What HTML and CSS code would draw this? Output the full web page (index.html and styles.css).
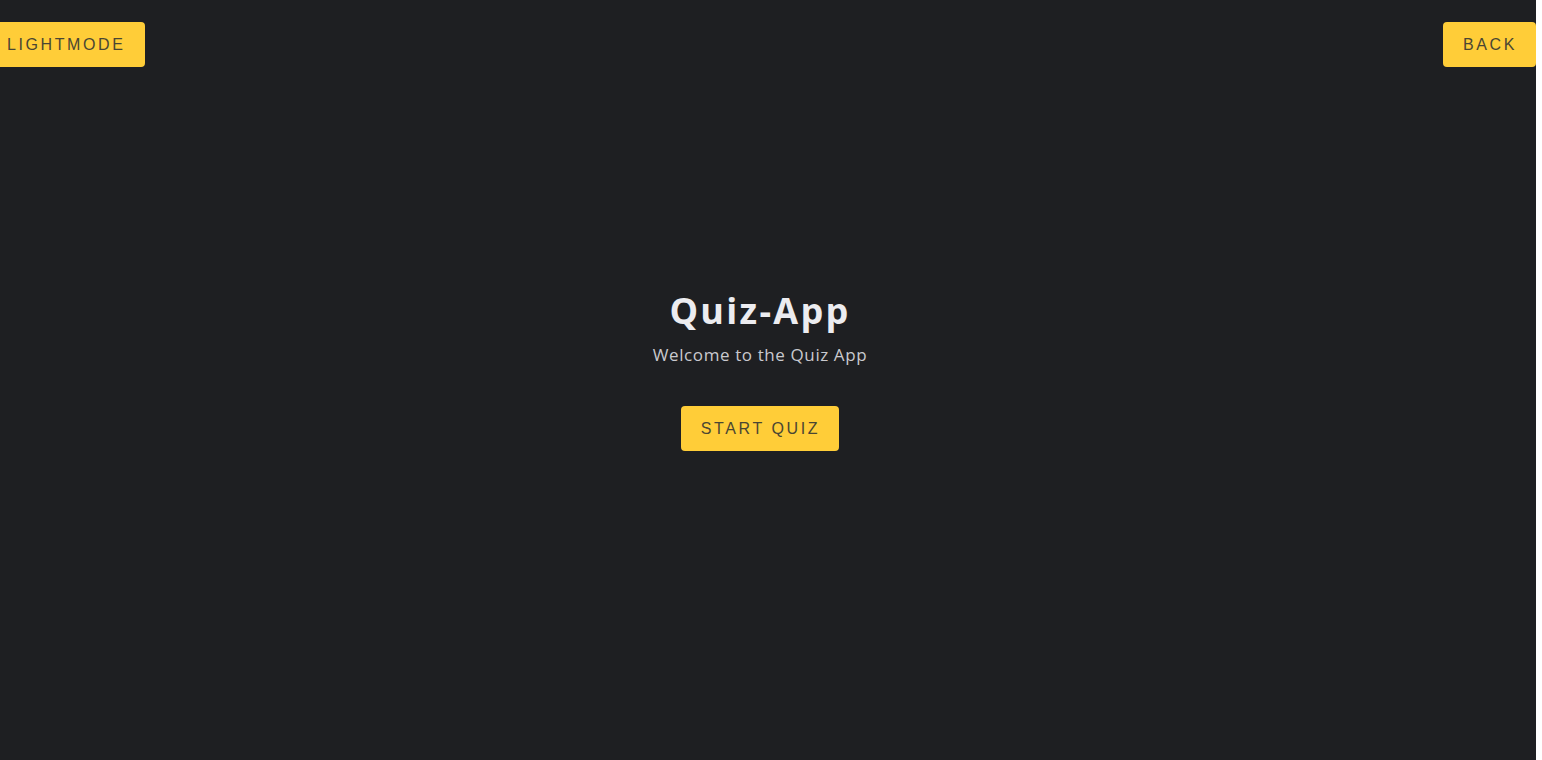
FILE: index.html
```html
<!DOCTYPE html>
<html lang="en">
<head>
<meta charset="utf-8">
<title>Quiz-App</title>
<link rel="stylesheet" href="styles.css">
</head>
<body>
<div class="app">
  <header class="topbar">
    <button class="btn btn-mode">LIGHTMODE</button>
    <button class="btn btn-back">BACK</button>
  </header>
  <main class="home">
    <h1 class="title">Quiz-App</h1>
    <p class="subtitle">Welcome to the Quiz App</p>
    <button class="btn btn-start">START QUIZ</button>
  </main>
</div>
</body>
</html>
```

FILE: styles.css
```css
html, body {
  margin: 0;
  padding: 0;
  background: #ffffff;
  overflow: hidden;
}

.app {
  width: 1536px;
  height: 760px;
  background: #1e1f22;
  display: flex;
  flex-direction: column;
  overflow: hidden;
}

.topbar {
  display: flex;
  justify-content: space-between;
  align-items: flex-start;
  padding-top: 22px;
}

.btn {
  font-family: "Liberation Sans", Arial, sans-serif;
  font-size: 16px;
  line-height: 21px;
  letter-spacing: 2.6px;
  color: #4a4633;
  background: #ffcd38;
  border: none;
  border-radius: 4px;
  padding: 12px 19px 12px 20px;
  cursor: pointer;
}

.btn-mode {
  margin-left: -13px;
}

.home {
  flex: 1;
  display: flex;
  flex-direction: column;
  align-items: center;
  padding-right: 16px;
  padding-top: 221px;
}

.title {
  margin: 0;
  font-family: "Open Sans", sans-serif;
  font-weight: 700;
  font-size: 36px;
  line-height: 46px;
  letter-spacing: 2.3px;
  color: #ececf0;
}

.subtitle {
  margin: 10px 0 0;
  font-family: "Open Sans", sans-serif;
  font-size: 17px;
  line-height: 22px;
  letter-spacing: 0.6px;
  color: #c9c9ce;
}

.btn-start {
  margin-top: 40px;
}
```
